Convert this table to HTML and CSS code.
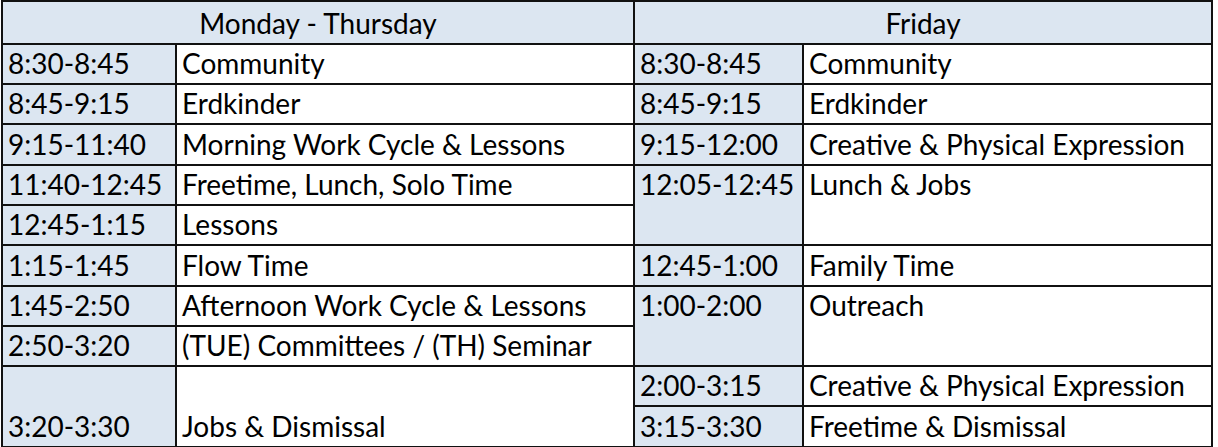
FILE: index.html
```html
<!DOCTYPE html>
<html lang="en">
<head>
<meta charset="utf-8">
<title>Schedule</title>
<link rel="stylesheet" href="styles.css">
</head>
<body>
<div class="sched">
  <div class="half half-left">
    <div class="hd">Monday - Thursday</div>
    <div class="t">8:30-8:45</div><div class="a">Community</div>
    <div class="t">8:45-9:15</div><div class="a">Erdkinder</div>
    <div class="t">9:15-11:40</div><div class="a">Morning Work Cycle &amp; Lessons</div>
    <div class="t">11:40-12:45</div><div class="a">Freetime, Lunch, Solo Time</div>
    <div class="t">12:45-1:15</div><div class="a">Lessons</div>
    <div class="t">1:15-1:45</div><div class="a">Flow Time</div>
    <div class="t">1:45-2:50</div><div class="a">Afternoon Work Cycle &amp; Lessons</div>
    <div class="t">2:50-3:20</div><div class="a">(TUE) Committees / (TH) Seminar</div>
    <div class="t span2">3:20-3:30</div><div class="a span2">Jobs &amp; Dismissal</div>
  </div>
  <div class="half half-right">
    <div class="hd">Friday</div>
    <div class="t">8:30-8:45</div><div class="a">Community</div>
    <div class="t">8:45-9:15</div><div class="a">Erdkinder</div>
    <div class="t">9:15-12:00</div><div class="a">Creative &amp; Physical Expression</div>
    <div class="t span2 top">12:05-12:45</div><div class="a span2 top">Lunch &amp; Jobs</div>
    <div class="t">12:45-1:00</div><div class="a">Family Time</div>
    <div class="t span2 top">1:00-2:00</div><div class="a span2 top">Outreach</div>
    <div class="t">2:00-3:15</div><div class="a">Creative &amp; Physical Expression</div>
    <div class="t">3:15-3:30</div><div class="a">Freetime &amp; Dismissal</div>
  </div>
</div>
</body>
</html>
```
FILE: styles.css
```css
html, body {
  margin: 0;
  padding: 0;
  background: #ffffff;
}

body {
  font-family: Lato, "Open Sans", "Liberation Sans", sans-serif;
  font-size: 28px;
  color: #000000;
  overflow: hidden;
}

.sched {
  display: flex;
  gap: 2px;
  width: max-content;
  margin-left: 1px;
  padding: 2px;
  background: #111111;
}

.half {
  display: grid;
  gap: 2px;
  grid-template-rows: 41px 38px 38px 39px 38px 38px 39px 38px 38px 38px 39px;
}

.half-left {
  grid-template-columns: 172px 456px;
}

.half-right {
  grid-template-columns: 167px 407px;
}

.hd,
.t,
.a {
  display: flex;
  align-items: flex-end;
  line-height: 28px;
  padding: 0 0 6px 5px;
  white-space: nowrap;
  overflow: hidden;
}

.hd {
  grid-column: 1 / span 2;
  justify-content: center;
  padding-left: 0;
  background: #dce6f1;
}

.t {
  background: #dce6f1;
}

.a {
  background: #ffffff;
}

.span2 {
  grid-row: span 2;
}

.top {
  align-items: flex-start;
  padding-top: 4px;
  padding-bottom: 0;
}
```
